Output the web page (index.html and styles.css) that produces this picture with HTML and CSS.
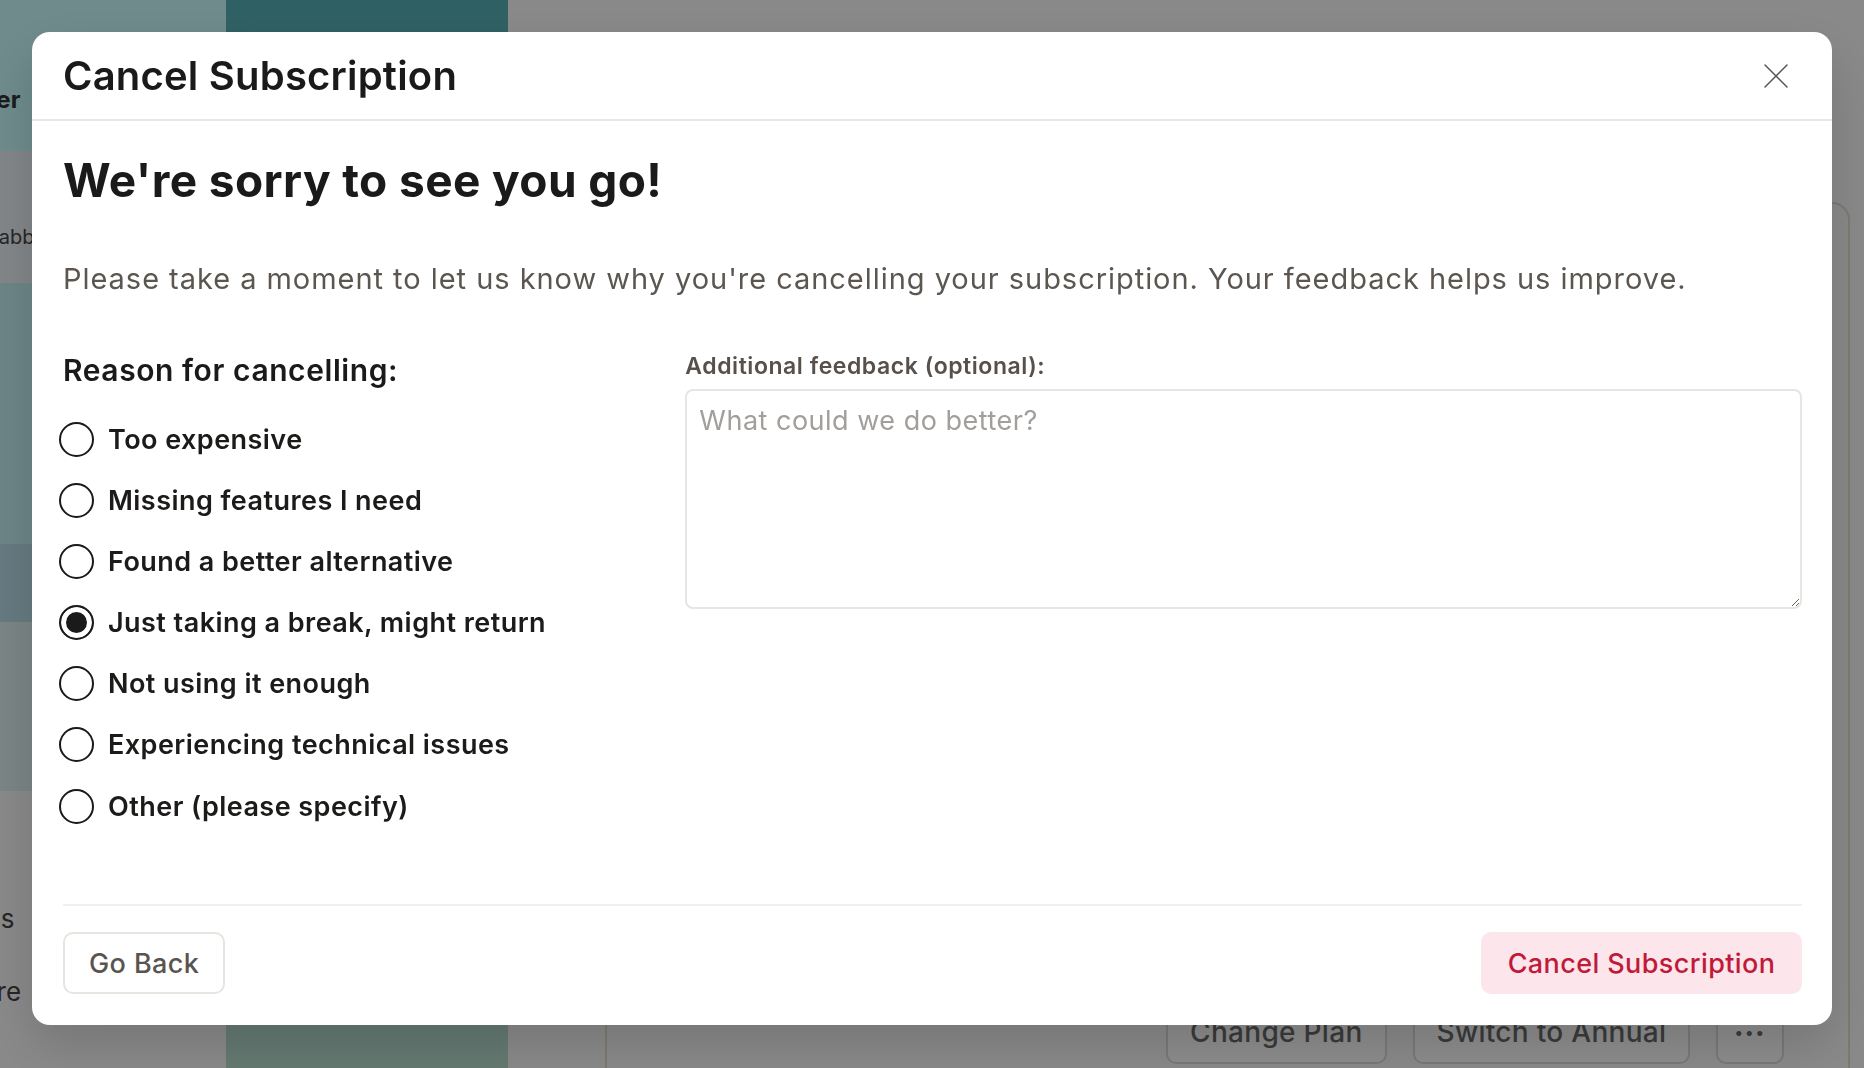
FILE: index.html
```html
<!DOCTYPE html>
<html lang="en">
<head>
    <meta charset="UTF-8">
    <meta name="viewport" content="width=device-width, initial-scale=1.0">
    <title>Cancel Subscription</title>
    <link rel="stylesheet" href="styles.css">
</head>
<body>
    <!-- page behind the dialog -->
    <div class="page">
        <aside class="side">
            <div class="side-block teal"><span class="cut">Manager</span></div>
            <div class="side-block pale"><span class="cut">Scrabble</span></div>
            <div class="side-block mid"></div>
            <div class="side-block deep"></div>
            <div class="side-block mist"></div>
            <div class="side-block plain">
                <span class="cut">Settings</span>
                <span class="cut">Store</span>
            </div>
        </aside>
        <div class="hero"></div>
        <main class="main">
            <div class="card">
                <div class="card-actions">
                    <button class="ghost">Change Plan</button>
                    <button class="ghost">Switch to Annual</button>
                    <button class="ghost dots">&bull;&bull;&bull;</button>
                </div>
            </div>
        </main>
    </div>

    <div class="overlay">
        <div class="modal">
            <header class="modal-head">
                <h1>Cancel Subscription</h1>
                <button class="close" aria-label="Close">
                    <svg width="24" height="24" viewBox="0 0 24 24" fill="none" stroke="currentColor" stroke-width="1.5" stroke-linecap="round">
                        <path d="M1 1L23 23M23 1L1 23"/>
                    </svg>
                </button>
            </header>

            <div class="modal-body">
                <h2>We're sorry to see you go!</h2>
                <p class="lead">Please take a moment to let us know why you're cancelling your subscription. Your feedback helps us improve.</p>

                <div class="form-grid">
                    <div class="reasons">
                        <h3>Reason for cancelling:</h3>
                        <label class="option"><input type="radio" name="reason"> Too expensive</label>
                        <label class="option"><input type="radio" name="reason"> Missing features I need</label>
                        <label class="option"><input type="radio" name="reason"> Found a better alternative</label>
                        <label class="option"><input type="radio" name="reason" checked> Just taking a break, might return</label>
                        <label class="option"><input type="radio" name="reason"> Not using it enough</label>
                        <label class="option"><input type="radio" name="reason"> Experiencing technical issues</label>
                        <label class="option"><input type="radio" name="reason"> Other (please specify)</label>
                    </div>
                    <div class="feedback">
                        <label for="feedback">Additional feedback (optional):</label>
                        <textarea id="feedback" placeholder="What could we do better?"></textarea>
                    </div>
                </div>

                <div class="modal-foot">
                    <button class="btn btn-back">Go Back</button>
                    <button class="btn btn-danger">Cancel Subscription</button>
                </div>
            </div>
        </div>
    </div>
</body>
</html>
```

FILE: styles.css
```css
* {
    box-sizing: border-box;
}
body {
    margin: 0;
    height: 100vh;
    overflow: hidden;
    font-family: Inter, "Noto Sans", sans-serif;
    background: #f9f9fb;
    color: #1a1a1a;
}

/* background page */
.page {
    display: flex;
    height: 100vh;
}
.side {
    width: 226px;
    display: flex;
    flex-direction: column;
}
.side-block {
    display: flex;
    flex-direction: column;
    width: 226px;
}
.side-block.teal { height: 151px; background: #cafdff; }
.side-block.pale { height: 132px; background: #eef4f7; }
.side-block.mid { height: 261px; background: #c6f2f6; }
.side-block.deep { height: 78px; background: #b9deea; }
.side-block.mist { height: 169px; background: #e0f2f4; }
.side-block.plain { flex: 1; }
.cut {
    display: block;
    white-space: nowrap;
    font-size: 24px;
    color: #444;
}
.teal .cut { margin: 85px 0 0 -84px; font-weight: 700; color: #333; }
.pale .cut { margin: 74px 0 0 -33px; font-size: 20px; }
.plain .cut:first-child { margin: 112px 0 0 -85px; font-size: 26px; }
.plain .cut:last-child { margin: 42px 0 0 -44px; font-size: 26px; }

.hero {
    width: 282px;
    background: linear-gradient(#55afb4, #87c9c8 50%, #b8decf);
}
.main {
    flex: 1;
    padding: 202px 14px 0 97px;
}
.card {
    height: 100%;
    border: 2px solid #e6dbd0;
    border-bottom: none;
    border-radius: 18px 18px 0 0;
    display: flex;
    flex-direction: column;
    justify-content: flex-end;
}
.card-actions {
    display: flex;
    justify-content: flex-end;
    gap: 26px;
    padding: 0 64px 4px 0;
}
.ghost {
    font-family: inherit;
    font-size: 28px;
    font-weight: 500;
    letter-spacing: 0.3px;
    color: #6a6a6a;
    background: #fff;
    border: 2px solid #e0d9d3;
    border-radius: 10px;
    height: 64px;
    padding: 0 22px;
}
.ghost.dots { padding: 0 16px; font-size: 16px; letter-spacing: 2px; }

/* dialog */
.overlay {
    position: fixed;
    inset: 0;
    background: rgba(0, 0, 0, 0.45);
    display: flex;
    justify-content: center;
    align-items: flex-start;
    padding-top: 32px;
}
.modal {
    width: 1800px;
    background: #fff;
    border-radius: 18px;
    box-shadow: 0 20px 50px rgba(0, 0, 0, 0.15);
}
.modal-head {
    display: flex;
    align-items: center;
    justify-content: space-between;
    height: 89px;
    padding: 0 44px 0 31px;
    border-bottom: 2px solid #ebe7e3;
}
.modal-head h1 {
    margin: 0;
    font-size: 40px;
    font-weight: 600;
    letter-spacing: 0.2px;
}
.close {
    background: none;
    border: none;
    padding: 0;
    color: #555;
    display: flex;
}
.modal-body {
    padding: 31px 30px 31px 31px;
}
.modal-body h2 {
    margin: 0;
    font-size: 46px;
    font-weight: 700;
    line-height: 56px;
    letter-spacing: 0.4px;
}
.lead {
    margin: 50px 0 0;
    font-size: 29px;
    line-height: 42px;
    letter-spacing: 0.96px;
    color: #5c5651;
}
.form-grid {
    display: grid;
    grid-template-columns: 1fr 2fr;
    gap: 64px;
    margin-top: 50px;
}
.reasons h3 {
    margin: 0 0 32px;
    font-size: 30px;
    font-weight: 600;
    line-height: 40px;
    letter-spacing: 0.57px;
}
.option {
    display: flex;
    align-items: center;
    gap: 14px;
    height: 34px;
    margin-bottom: 27.2px;
    font-size: 27px;
    font-weight: 600;
    letter-spacing: 0.45px;
    color: #1c1b1a;
}
.option input {
    appearance: none;
    margin: 0 0 0 -4px;
    width: 35px;
    height: 35px;
    border: 2px solid #1a1a1a;
    border-radius: 50%;
    background: #fff;
}
.option input:checked {
    background: #1a1a1a;
    box-shadow: inset 0 0 0 5px #fff;
}
.feedback label {
    display: block;
    margin-top: 2px;
    font-size: 23px;
    font-weight: 600;
    line-height: 28px;
    letter-spacing: 0.55px;
    color: #57504b;
}
.feedback textarea {
    display: block;
    width: 100%;
    height: 220px;
    margin-top: 9px;
    padding: 13px 12px;
    font-family: inherit;
    font-size: 27px;
    letter-spacing: 0.5px;
    border: 2px solid #e8e4e0;
    border-radius: 8px;
    resize: vertical;
}
.feedback textarea::placeholder {
    color: #a39e9a;
}
.modal-foot {
    display: flex;
    justify-content: space-between;
    margin-top: 54px;
    padding-top: 26px;
    border-top: 2px solid #f1f0ef;
}
.btn {
    font-family: inherit;
    font-size: 27px;
    font-weight: 500;
    letter-spacing: 0.4px;
    height: 62px;
    border-radius: 10px;
    padding: 0 24px;
}
.btn-back {
    background: #fff;
    color: #5a5450;
    border: 2px solid #e8e4e0;
}
.btn-danger {
    background: #fce6eb;
    color: #c01a3a;
    border: none;
    width: 321px;
}
```
